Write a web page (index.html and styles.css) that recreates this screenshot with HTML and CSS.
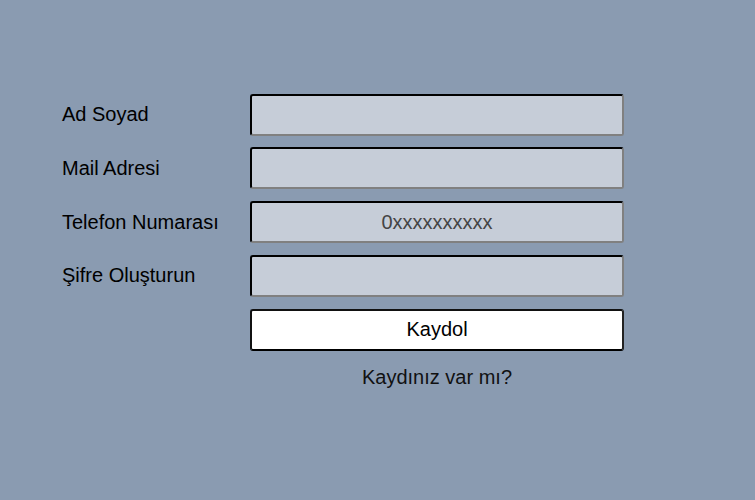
FILE: index.html
```html
<!DOCTYPE html>
<html lang="tr">
<head>
<meta charset="utf-8">
<link rel="stylesheet" href="styles.css">
</head>
<body>
<form class="form">
  <label class="label" for="ad">Ad Soyad</label>
  <input class="field" id="ad" type="text">
  <label class="label" for="mail">Mail Adresi</label>
  <input class="field" id="mail" type="text">
  <label class="label" for="tel">Telefon Numarası</label>
  <input class="field" id="tel" type="text" placeholder="0xxxxxxxxxx">
  <label class="label" for="sifre">Şifre Oluşturun</label>
  <input class="field" id="sifre" type="password">
  <span></span>
  <button class="btn" type="button">Kaydol</button>
  <span></span>
  <a class="link">Kaydınız var mı?</a>
</form>
</body>
</html>
```
FILE: styles.css
```css
html, body {
  margin: 0;
  height: 100%;
}
body {
  background: #8a9bb1;
  font-family: "Liberation Sans", Arial, sans-serif;
  font-size: 20px;
  color: #000;
}
.form {
  display: grid;
  grid-template-columns: 188px 374px;
  grid-auto-rows: 42px;
  row-gap: 11.75px;
  padding: 93.5px 0 0 62px;
}
.label {
  display: flex;
  align-items: center;
  height: 42px;
  margin-top: 0;
}
.field {
  box-sizing: border-box;
  width: 374px;
  height: 42px;
  margin: 0;
  background: #c6cdd8;
  border: 2px inset #767676;
  border-top-color: #1a1a1a;
  border-left-color: #1a1a1a;
  border-right-color: #808080;
  border-bottom-color: #808080;
  border-radius: 3px;
  font-family: "Liberation Sans", Arial, sans-serif;
  font-size: 20px;
  text-align: center;
  color: #222;
}
.field::placeholder {
  color: #444;
}
.btn {
  box-sizing: border-box;
  width: 374px;
  height: 42px;
  margin: 0;
  background: #fff;
  border: 2px solid #111;
  border-right-color: #222;
  border-bottom-color: #000;
  border-radius: 3px;
  font-family: "Liberation Sans", Arial, sans-serif;
  font-size: 20px;
  color: #000;
}
.link {
  text-align: center;
  line-height: 42px;
  margin-top: -6px;
  color: #111;
}
```
